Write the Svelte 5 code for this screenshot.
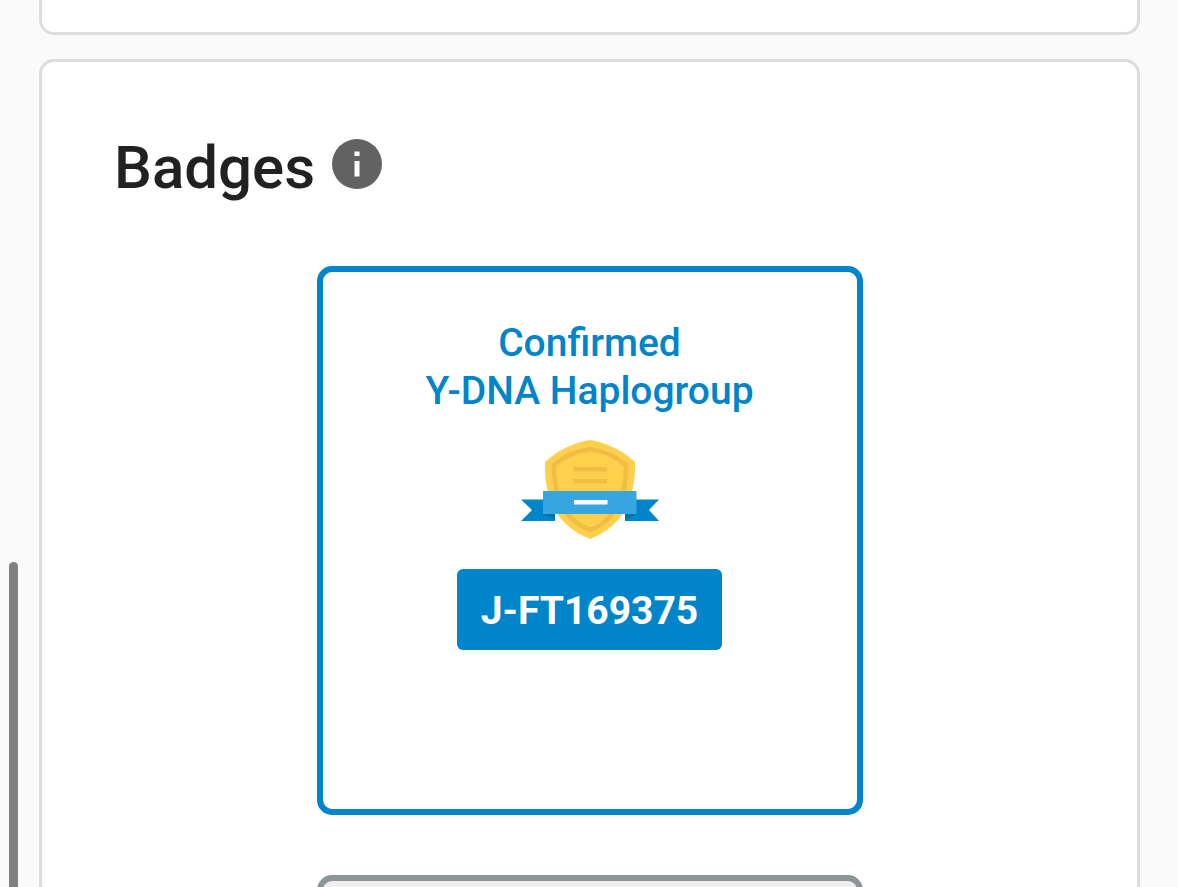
<script>
  const badge = { kind: 'Confirmed', test: 'Y-DNA Haplogroup', haplogroup: 'J-FT169375' };
</script>

<div class="page">
  <div class="scroll-thumb"></div>
  <section class="card previous"></section>

  <section class="card badges">
    <header>
      <h2>Badges</h2>
      <button class="info" aria-label="About badges">
        <svg viewBox="0 0 50 50" aria-hidden="true">
          <circle cx="25" cy="25" r="25" fill="#626262" />
          <path d="M22.5 12.5h5v4.5h-5zM22.5 22h5v15.500h-5z" fill="#fff" />
        </svg>
      </button>
    </header>

    <div class="list">
      <article class="badge">
        <h3>{badge.kind}<br />{badge.test}</h3>
        <svg class="shield" viewBox="0 0 138 99" aria-hidden="true">
          <path d="M69 0C83 2 100 9 114 22C115 57 103 86 69 99C35 86 23 57 24 22C38 9 55 2 69 0Z" fill="#ffd04c" />
          <path d="M69 9C81 11 95 16 105 25C105 56 96 80 69 90C42 80 33 56 33 25C43 16 57 11 69 9Z" fill="none" stroke="#f1bd43" stroke-width="4.500" />
          <path d="M52.500 27h33.500v4.500H52.500zM52.500 39h33.500v4.500H52.500z" fill="#f1bd43" />
          <path d="M0 59.500h34v21.500H0l11-11zM138 59.500h-34v21.500h34l-10-11z" fill="#0085cb" />
          <path d="M22 74h12v6zM116 74h-12v6z" fill="#0571ad" />
          <path d="M22 51h93.500v23H22z" fill="#36a5e0" />
          <path d="M53 60h33.500v4.500H53z" fill="#fff" />
        </svg>
        <button class="haplogroup">{badge.haplogroup}</button>
      </article>
      <article class="badge inactive"></article>
    </div>
  </section>
</div>

<style>
  :global(body) {
    background: #fafafa;
  }

  .page {
    position: relative;
    box-sizing: border-box;
    height: 100vh;
    overflow: hidden;
    padding: 0 38px 0 39px;
    display: flex;
    flex-direction: column;
    gap: 24px;
    font-family: Roboto, sans-serif;
  }

  .scroll-thumb {
    position: absolute;
    left: 9px;
    top: 562px;
    bottom: -20px;
    width: 9px;
    border-radius: 5px;
    background: #7f7f7f;
  }

  .card {
    flex: none;
    box-sizing: border-box;
    background: #fff;
    border: 3px solid #dddddd;
    border-radius: 15px;
  }

  .previous {
    height: 35px;
    border-top: 0;
    border-radius: 0 0 15px 15px;
  }

  .badges {
    padding: 76px 72px;
  }

  header {
    display: flex;
    align-items: center;
    gap: 17px;
  }

  h2,
  h3 {
    margin: 0;
    font-weight: 500;
  }

  h2 {
    font-size: 60px;
    line-height: 60px;
    color: #212121;
  }

  button {
    border: 0;
    font-family: inherit;
    cursor: pointer;
  }

  .info {
    width: 50px;
    height: 50px;
    margin-bottom: 8px;
    padding: 0;
    background: none;
  }

  .info svg {
    display: block;
  }

  .list {
    display: flex;
    flex-direction: column;
    align-items: center;
    gap: 60px;
    margin-top: 68px;
  }

  .badge {
    box-sizing: border-box;
    width: 100%;
    max-width: 546px;
    min-height: 549px;
    padding: 47px 24px;
    display: flex;
    flex-direction: column;
    align-items: center;
    border: 6px solid #0085cb;
    border-radius: 15px;
  }

  .inactive {
    border-color: #8e9597;
    background: #eeeeee;
  }

  h3 {
    font-size: 39px;
    line-height: 48px;
    text-align: center;
    color: #0085cb;
  }

  .shield {
    width: 138px;
    height: 99px;
    margin: 25px 0 30px;
  }

  .haplogroup {
    padding: 18px 24px 15px;
    border-radius: 6px;
    background: #0085cb;
    color: #fff;
    font-size: 39px;
    font-weight: 700;
    line-height: 48px;
  }
</style>
